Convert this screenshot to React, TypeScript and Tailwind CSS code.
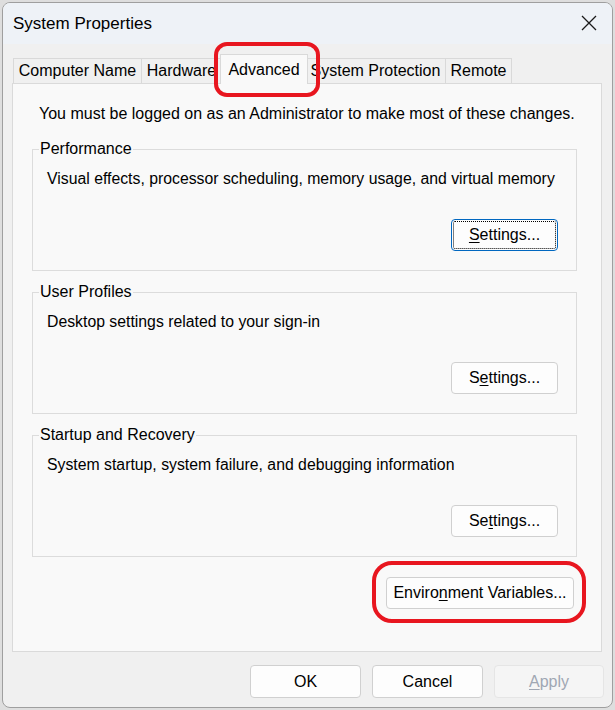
import React from 'react';

// Mnemonic letter, underlined like a Win32 access key
function Key({ children }: { children: React.ReactNode }) {
  return <span className="underline underline-offset-[2px]">{children}</span>;
}

interface TabProps {
  label: string;
  width: string;
  selected?: boolean;
}

function Tab({ label, width, selected }: TabProps) {
  if (selected) {
    return (
      <div
        className={`${width} relative z-10 -mx-[2px] h-[30px] border border-b-0 border-[#d9d9d9] bg-[#f9f9f9] flex items-center justify-center text-[16px] text-black`}
      >
        {label}
      </div>
    );
  }
  return (
    <div
      className={`${width} -ml-px mb-px h-[25px] border border-b-0 border-[#d9d9d9] bg-[#f0f0f0] flex items-center justify-center text-[16px] text-black first:ml-0`}
    >
      {label}
    </div>
  );
}

function Button({
  children,
  className = '',
  focused,
  disabled,
}: {
  children: React.ReactNode;
  className?: string;
  focused?: boolean;
  disabled?: boolean;
}) {
  let look = 'border-[#d0d0d0] bg-[#fdfdfd] text-black';
  if (focused) look = 'border-[#0067c0] bg-[#fdfdfd] text-black outline-1 outline-dotted outline-black -outline-offset-[3px]';
  if (disabled) look = 'border-[#e5e5e5] bg-[#f5f5f5] text-[#a0a7b3]';
  return (
    <button
      type="button"
      className={`h-[32px] rounded-[4px] border text-[16px] flex items-center justify-center ${look} ${className}`}
    >
      {children}
    </button>
  );
}

function Group({
  title,
  text,
  settings,
  focused,
}: {
  title: string;
  text: string;
  settings: React.ReactNode;
  focused?: boolean;
}) {
  return (
    <fieldset className="w-[545px] border border-[#dcdcdc] pl-[14px] pr-[18px] pb-[19px]">
      <legend className="-ml-[8px] px-[1px] text-[16px] leading-[18px] text-black">{title}</legend>
      <p className="mt-[12px] text-[15.8px] leading-[18px] text-black whitespace-nowrap">{text}</p>
      <div className="mt-[31px] flex justify-end">
        <Button focused={focused} className="w-[107px]">
          {settings}
        </Button>
      </div>
    </fieldset>
  );
}

export default function App() {
  return (
    <div className="w-[615px] h-[710px] bg-[#dedede] pl-[2px] pt-[2px] font-['Liberation_Sans',Arial,sans-serif]">
      <div className="relative w-[611px] h-[706px] rounded-[8px] border border-[#9f9f9f] bg-[#f0f0f0] flex flex-col overflow-hidden">
        {/* Title bar */}
        <div className="h-[41px] bg-[#eef2f7] flex items-center justify-between pl-[10px] pr-[15px]">
          <span className="text-[17px] text-black">System Properties</span>
          <svg width="16" height="16" viewBox="0 0 16 16" className="mt-[-2px]">
            <path d="M1 1 L15 15 M15 1 L1 15" stroke="#1a1a1a" strokeWidth="1.3" fill="none" />
          </svg>
        </div>

        {/* Body */}
        <div className="flex-1 flex flex-col pl-[9px] pr-[8px] pt-[10px]">
          <div className="flex items-end ml-[1px] -mb-px">
            <Tab label="Computer Name" width="w-[129px]" />
            <Tab label="Hardware" width="w-[81px]" />
            <Tab label="Advanced" width="w-[88px]" selected />
            <Tab label="System Protection" width="w-[141px]" />
            <Tab label="Remote" width="w-[67px]" />
          </div>

          <div className="w-[590px] h-[569px] border border-[#dadada] bg-[#f9f9f9] pl-[19px] pt-[21px] flex flex-col">
            <p className="ml-[7px] text-[16px] leading-[18px] text-black whitespace-nowrap">
              You must be logged on as an Administrator to make most of these changes.
            </p>

            <div className="mt-[17px] flex flex-col gap-[12px]">
              <Group
                title="Performance"
                text="Visual effects, processor scheduling, memory usage, and virtual memory"
                focused
                settings={<><Key>S</Key>ettings...</>}
              />
              <Group
                title="User Profiles"
                text="Desktop settings related to your sign-in"
                settings={<>S<Key>e</Key>ttings...</>}
              />
              <Group
                title="Startup and Recovery"
                text="System startup, system failure, and debugging information"
                settings={<>Se<Key>t</Key>tings...</>}
              />
            </div>

            <div className="mt-[20px] flex justify-end pr-[27px]">
              <Button className="w-[188px]">
                Enviro<Key>n</Key>ment Variables...
              </Button>
            </div>
          </div>

          <div className="mt-[13px] flex justify-end gap-[11px]">
            <Button className="w-[111px] h-[33px]">OK</Button>
            <Button className="w-[111px] h-[33px]">Cancel</Button>
            <Button className="w-[110px] h-[33px]" disabled>
              <Key>A</Key>pply
            </Button>
          </div>
        </div>

        {/* Red annotation marks drawn over the dialog */}
        <div className="absolute left-[211px] top-[39px] w-[106px] h-[55px] rounded-[13px] border-[4px] border-[#e8161f]" />
        <div className="absolute left-[369px] top-[558px] w-[214px] h-[62px] rounded-[20px] border-[4px] border-[#e8161f]" />
      </div>
    </div>
  );
}
